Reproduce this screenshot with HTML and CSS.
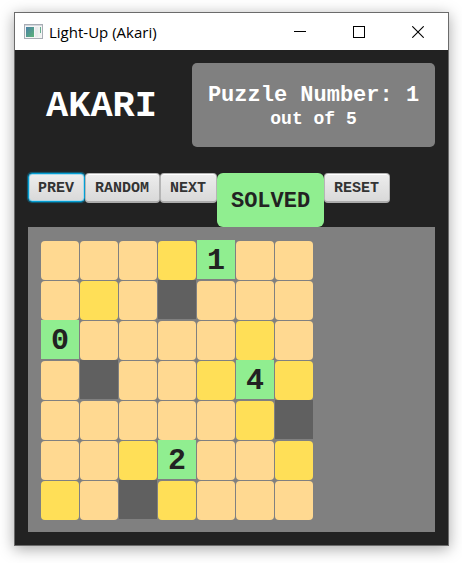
FILE: index.html
```html
<!DOCTYPE html>
<html lang="en">
<head>
<meta charset="utf-8">
<title>Light-Up (Akari)</title>
<link rel="stylesheet" href="styles.css">
</head>
<body>
<div class="window">
  <header class="titlebar">
    <svg class="app-icon" width="19" height="15" viewBox="0 0 19 15" aria-hidden="true">
      <defs><linearGradient id="pane" x1="0" y1="0" x2="1" y2="1"><stop offset="0" stop-color="#4a80a8"/><stop offset="1" stop-color="#5cb377"/></linearGradient></defs>
      <rect x=".5" y=".5" width="18" height="14" fill="#f5f5f5" stroke="#a9adb5"/>
      <path d="M1 1.5h17" stroke="#d5d8de"/>
      <rect x="2" y="3" width="8" height="10" fill="url(#pane)"/>
      <rect x="11" y="3" width="3" height="10" fill="#e9ebed"/>
      <rect x="14" y="3" width="3" height="10" fill="#eef3ef"/>
      <path d="M16.5 3v6" stroke="#67ad91"/>
    </svg>
    <span class="caption">Light-Up (Akari)</span>
    <div class="window-controls">
      <button class="window-button" aria-label="Minimize"><svg width="12" height="12" viewBox="0 0 12 12"><path d="M0 5.500h12" stroke="#000"/></svg></button>
      <button class="window-button" aria-label="Maximize"><svg width="12" height="12" viewBox="0 0 12 12"><rect x=".5" y=".5" width="11" height="11" fill="none" stroke="#000"/></svg></button>
      <button class="window-button" aria-label="Close"><svg width="12" height="12" viewBox="0 0 12 12"><path d="M.3.3l11.400 11.400M11.700.3L.3 11.700" stroke="#000" stroke-width="1.100"/></svg></button>
    </div>
  </header>
  <main class="app">
    <div class="heading">
      <h1 class="title">AKARI</h1>
      <div class="puzzle-info">
        <div class="puzzle-number">Puzzle Number: 1</div>
        <div class="puzzle-total">out of 5</div>
      </div>
    </div>
    <div class="toolbar">
      <button class="tool focused">PREV</button>
      <button class="tool">RANDOM</button>
      <button class="tool">NEXT</button>
      <div class="status" role="status">SOLVED</div>
      <button class="tool">RESET</button>
    </div>
    <div class="board">
      <button class="cell lit"></button><button class="cell lit"></button><button class="cell lit"></button><button class="cell lamp"></button><div class="cell clue">1</div><button class="cell lit"></button><button class="cell lit"></button>
      <button class="cell lit"></button><button class="cell lamp"></button><button class="cell lit"></button><div class="cell wall"></div><button class="cell lit"></button><button class="cell lit"></button><button class="cell lit"></button>
      <div class="cell clue">0</div><button class="cell lit"></button><button class="cell lit"></button><button class="cell lit"></button><button class="cell lit"></button><button class="cell lamp"></button><button class="cell lit"></button>
      <button class="cell lit"></button><div class="cell wall"></div><button class="cell lit"></button><button class="cell lit"></button><button class="cell lamp"></button><div class="cell clue">4</div><button class="cell lamp"></button>
      <button class="cell lit"></button><button class="cell lit"></button><button class="cell lit"></button><button class="cell lit"></button><button class="cell lit"></button><button class="cell lamp"></button><div class="cell wall"></div>
      <button class="cell lit"></button><button class="cell lit"></button><button class="cell lamp"></button><div class="cell clue">2</div><button class="cell lit"></button><button class="cell lit"></button><button class="cell lamp"></button>
      <button class="cell lamp"></button><button class="cell lit"></button><div class="cell wall"></div><button class="cell lamp"></button><button class="cell lit"></button><button class="cell lit"></button><button class="cell lit"></button>
    </div>
  </main>
</div>
</body>
</html>
```
FILE: styles.css
```css
* {
  box-sizing: border-box;
}

body {
  margin: 0;
  padding: 12px 13px 17px 14px;
  background: #fff;
  font-family: "Courier New", "Liberation Mono", monospace;
  font-weight: bold;
}

button {
  font: inherit;
  border: 0;
  padding: 0;
}

.window {
  border: 1px solid #6b6b6b;
  box-shadow: 0 3px 14px rgba(0, 0, 0, 0.35);
}

.titlebar {
  display: flex;
  align-items: center;
  height: 37px;
  padding: 0 1px 0 9px;
  background: #fff;
}

.caption {
  margin-left: 6px;
  font: 15px "Open Sans", sans-serif;
  color: #000;
}

.window-controls {
  display: flex;
  align-self: stretch;
  margin-left: auto;
}

.window-button {
  display: grid;
  place-items: center;
  width: 59px;
  background: none;
}

.app {
  padding: 13px;
  background: #222;
}

.heading {
  display: flex;
  justify-content: space-between;
}

.title {
  margin: 0;
  padding: 2px 0 0 18px;
  align-self: center;
  font-size: 37px;
  line-height: 42px;
  color: #fff;
}

.puzzle-info {
  padding: 19px 13px 17px;
  border-radius: 5px;
  background: #808080;
  color: #fff;
  text-align: center;
}

.puzzle-number {
  min-width: 217px;
  font-size: 22px;
  line-height: 27px;
}

.puzzle-total {
  font-size: 18px;
  line-height: 21px;
}

.toolbar {
  display: flex;
  align-items: flex-start;
  margin-top: 26px;
}

.tool {
  height: 30px;
  padding: 1px 10px 0 9px;
  border: 1px solid #b5b5b5;
  border-bottom: 2px solid #acacac;
  border-radius: 4px;
  background: linear-gradient(#ededed, #d9d9d9);
  box-shadow: inset 0 1px #fff;
  color: #333;
  font-size: 15px;
  line-height: 27px;
}

.tool.focused {
  border: 1px solid #039ed3;
  height: 29px;
  box-shadow: 0 0 1px 1px rgba(3, 158, 211, 0.5), inset 0 0 0 1px #a9d9ea;
}

.status {
  min-width: 107px;
  padding: 15px 13px 12px;
  border-radius: 6px;
  background: #90ee90;
  color: #222;
  font-size: 22px;
  line-height: 27px;
  text-align: center;
}

.board {
  display: grid;
  grid-template-columns: repeat(7, 38px);
  grid-auto-rows: 39px;
  gap: 1px;
  padding: 13px;
  background: #808080;
}

.cell {
  text-align: center;
}

.lit,
.lamp {
  margin-top: 1px;
  height: 39px;
  border-radius: 4px;
}

.lit {
  background: #ffd991;
}

.lamp {
  background: #ffdf57;
}

.wall {
  background: #606060;
}

.clue {
  background: #90ee90;
  color: #222;
  font-size: 30px;
  line-height: 42px;
}
```
